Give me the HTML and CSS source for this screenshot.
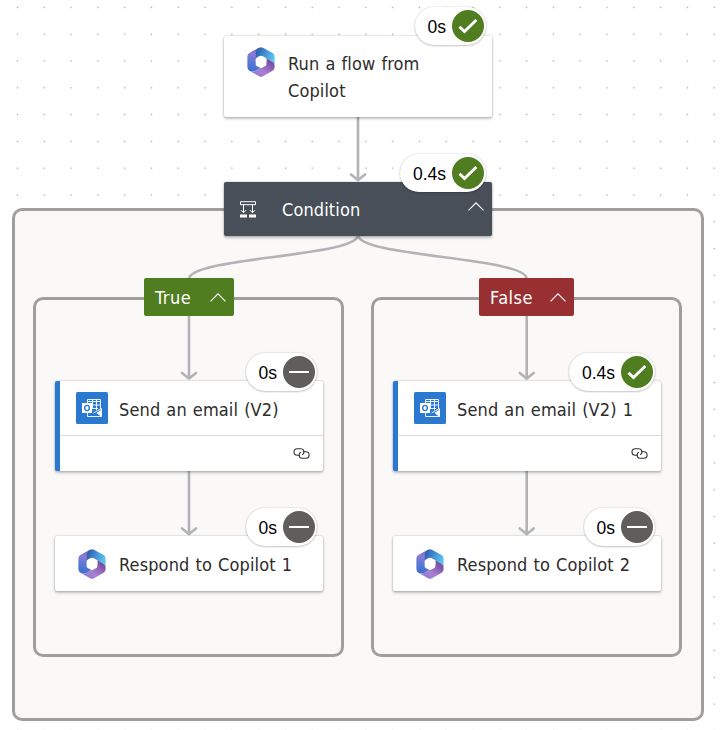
FILE: index.html
```html
<!DOCTYPE html>
<html lang="en">
<head>
<meta charset="utf-8">
<title>Flow run</title>
<link rel="stylesheet" href="styles.css">
</head>
<body>
<svg class="defs" width="0" height="0" aria-hidden="true">
  <defs>
    <linearGradient id="gLeft" x1=".6" y1="0" x2=".4" y2="1"><stop offset="0" stop-color="#5567b8"/><stop offset=".3" stop-color="#8c7cd6"/><stop offset=".65" stop-color="#5a78d6"/><stop offset="1" stop-color="#3f6fce"/></linearGradient>
    <linearGradient id="gTop" x1="0" y1=".3" x2="1" y2=".7"><stop offset="0" stop-color="#2f5cab"/><stop offset=".45" stop-color="#4492d5"/><stop offset="1" stop-color="#62cdf2"/></linearGradient>
    <linearGradient id="gBottom" x1="0" y1="1" x2="1" y2="0"><stop offset="0" stop-color="#7a78d8"/><stop offset=".4" stop-color="#ab80d4"/><stop offset="1" stop-color="#613c8c"/></linearGradient>
    <symbol id="copilot" viewBox="0 0 28 30">
      <path fill="url(#gLeft)" d="M12 .7 2.300 6.100Q.4 7.200.4 9.400v10.900q0 2.200 2 3.400 3.200 1.800 6.400 0l8.200-4.600-3-1.100-5.100-3V12l2-6z"/>
      <path fill="url(#gTop)" d="M12 .7q2-1.100 4 0l9.600 5.400q2 1.200 2 3.400v9.100q-.2-2.700-2.600-4.100L16.200 9.400q-2.200-1.100-4.400.1l-3 1.800V7Q8.800 2.600 12 .7z"/>
      <path fill="url(#gBottom)" d="m19.400 11.300 5.600 3.200q2.600 1.500 2.600 4.100v1.700q0 2.200-2 3.400L16 29.200q-2 1.100-4 0l-9.600-5.500q3.200 1.800 6.400 0l8.600-4.900q2-1.300 2-3.600z"/>
      <path fill="#fff" d="M13 9.200q1-.5 2 0l3.300 1.900q1 .6 1 1.700v4.400q0 1.100-1 1.700L15 20.800q-1 .5-2 0l-3.300-1.900q-1-.6-1-1.700v-4.400q0-1.100 1-1.700z"/>
    </symbol>
    <symbol id="outlook" viewBox="0 0 32 32">
      <rect width="32" height="32" rx="1.500" fill="#2b78d0"/>
      <g fill="none" stroke="#fff" stroke-width=".9">
        <path d="M11.500 11V7.500h13V17M11.500 9.500h13M16 13h8.500M16 16.500h6M16.500 7.500V17M20.500 7.500V18"/>
        <path d="M11.500 20v4.500h14V16.500L17.500 21"/>
      </g>
      <path fill="#fff" d="m20.500 21 5 4V17.500z"/>
      <rect x="6" y="11" width="10" height="10" fill="#fff"/>
      <ellipse cx="11" cy="16" rx="2.300" ry="2.600" fill="none" stroke="#2b78d0" stroke-width="1.400"/>
    </symbol>
    <symbol id="condition" viewBox="0 0 16 17">
      <path fill="none" stroke="#fff" d="M.5.700h15v3H.5zM3.500 3.700v8M12.500 3.700v8M1 9.200l2.500 2.500L6 9.200M10 9.200l2.500 2.500L15 9.200"/>
      <path fill="#fff" d="M0 13.400h7v3H0zM9 13.400h7v3H9z"/>
    </symbol>
    <symbol id="chevron" viewBox="0 0 16 9">
      <path d="M.5 8.400 8 .9l7.500 7.500" fill="none" stroke="#fff" stroke-width="1.100"/>
    </symbol>
    <symbol id="link" viewBox="0 0 17 11">
      <g fill="none" stroke="#323130" stroke-width="1.100">
        <path d="M7 7.300H4.300a3.300 3.300 0 0 1 0-6.600h3.500a3.200 3.200 0 0 1 2.900 4.500 3 3 0 0 1-1.500 1.600"/>
        <path d="M10 3.700h2.800a3.300 3.300 0 0 1 0 6.600H9.200a3.200 3.200 0 0 1-2.900-4.500 3 3 0 0 1 1.500-1.600"/>
      </g>
    </symbol>
    <symbol id="ok" viewBox="0 0 32 32">
      <circle cx="16" cy="16" r="16" fill="#4f7d20"/>
      <path d="m7.500 16.800 5 4.800L24.300 10" fill="none" stroke="#fff" stroke-width="2.900"/>
    </symbol>
    <symbol id="skip" viewBox="0 0 32 32">
      <circle cx="16" cy="16" r="16" fill="#605e5c"/>
      <path d="M6 16h20" stroke="#fff" stroke-width="2"/>
    </symbol>
  </defs>
</svg>

<main class="canvas">
  <section class="scope scope-outer"></section>
  <section class="scope scope-true"></section>
  <section class="scope scope-false"></section>

  <svg class="edges" viewBox="0 0 724 730" width="724" height="730" aria-hidden="true">
    <path d="M358 117v63M351 174.500l7 5.500 7-5.500"/>
    <path d="M358 235C358 257 189 257 189 279M358 235C358 257 526.700 257 526.700 279"/>
    <path d="M189 316v62.500M182 373l7 5.500 7-5.500M526.700 316v62.500M519.700 373l7 5.500 7-5.500"/>
    <path d="M189 471v63M182 528.500l7 5.500 7-5.500M526.700 471v63M519.700 528.500l7 5.500 7-5.500"/>
  </svg>

  <article class="node trigger">
    <div class="head"><svg class="logo"><use href="#copilot"/></svg><span class="title">Run a flow from Copilot</span></div>
    <div class="badge"><span>0s</span><svg><use href="#ok"/></svg></div>
  </article>

  <article class="node cond">
    <svg class="cond-icon"><use href="#condition"/></svg>
    <span class="title">Condition</span>
    <svg class="chevron"><use href="#chevron"/></svg>
    <div class="badge"><span>0.4s</span><svg><use href="#ok"/></svg></div>
  </article>

  <div class="branch branch-true"><span>True</span><svg class="chevron"><use href="#chevron"/></svg></div>
  <div class="branch branch-false"><span>False</span><svg class="chevron"><use href="#chevron"/></svg></div>

  <article class="node email left">
    <div class="head"><svg class="app"><use href="#outlook"/></svg><span class="title">Send an email (V2)</span></div>
    <div class="foot"><svg class="link"><use href="#link"/></svg></div>
    <div class="badge"><span>0s</span><svg><use href="#skip"/></svg></div>
  </article>
  <article class="node respond left">
    <div class="head"><svg class="logo"><use href="#copilot"/></svg><span class="title">Respond to Copilot 1</span></div>
    <div class="badge"><span>0s</span><svg><use href="#skip"/></svg></div>
  </article>

  <article class="node email right">
    <div class="head"><svg class="app"><use href="#outlook"/></svg><span class="title">Send an email (V2) 1</span></div>
    <div class="foot"><svg class="link"><use href="#link"/></svg></div>
    <div class="badge"><span>0.4s</span><svg><use href="#ok"/></svg></div>
  </article>
  <article class="node respond right">
    <div class="head"><svg class="logo"><use href="#copilot"/></svg><span class="title">Respond to Copilot 2</span></div>
    <div class="badge"><span>0s</span><svg><use href="#skip"/></svg></div>
  </article>
</main>
</body>
</html>
```
FILE: styles.css
```css
* { box-sizing: border-box; }

body {
  margin: 0;
  background: #fff;
  font-family: "DejaVu Sans Condensed", "DejaVu Sans", sans-serif;
  font-stretch: condensed;
  font-size: 18px;
  letter-spacing: .12px;
  word-spacing: .8px;
  color: #2d2c2b;
}

.defs { position: absolute; }
svg { display: block; flex: none; }

.canvas {
  position: relative;
  width: 724px;
  height: 730px;
  overflow: hidden;
  background-image: radial-gradient(circle at 50% 50%, #aaa 0, #aaa .6px, transparent 1.1px);
  background-size: 26.8px 26.8px;
  background-position: 4.1px -6px;
}

.scope {
  position: absolute;
  border: 3px solid #a19f9d;
  border-radius: 10px;
  background: #faf9f8;
}
.scope-outer { left: 12px; top: 208px; width: 692px; height: 513px; }
.scope-true { left: 33px; top: 297px; width: 311px; height: 360px; }
.scope-false { left: 371px; top: 297px; width: 311px; height: 360px; }

.edges { position: absolute; inset: 0; }
.edges path {
  fill: none;
  stroke: #b3b2b7;
  stroke-width: 2.600;
  stroke-linecap: round;
}

.node {
  position: absolute;
  width: 268px;
  border-radius: 2px;
  background: #fff;
  box-shadow: 0 0 2px rgba(0, 0, 0, .3), 0 2px 3px rgba(0, 0, 0, .22);
}
.head {
  display: flex;
  align-items: center;
  height: 55px;
  padding-left: 23px;
}
.logo { width: 28px; height: 30px; margin-right: 13px; }
.title { line-height: 27px; white-space: nowrap; padding-top: 2px; }

.trigger { left: 224px; top: 36px; height: 81px; }
.trigger .head { height: auto; align-items: flex-start; padding-top: 12px; }
.trigger .logo { margin-top: -1px; }
.trigger .title { width: 160px; white-space: normal; }

.cond {
  left: 224px;
  top: 182px;
  height: 54px;
  display: flex;
  align-items: center;
  padding: 0 8px 0 16px;
  background: #484f58;
  color: #fff;
}
.cond .title { padding-top: 0; }
.cond-icon { width: 16px; height: 17px; margin-right: 26px; }
.chevron { width: 16px; height: 9px; }
.cond .chevron { margin: -6px 0 0 auto; }

.branch {
  position: absolute;
  top: 278px;
  height: 38px;
  display: flex;
  align-items: center;
  justify-content: space-between;
  padding: 0 8px 0 11px;
  border-radius: 2px;
  color: #fff;
  letter-spacing: .5px;
}
.branch span { padding-top: 1px; }
.branch-true { left: 144px; width: 90px; background: #4f7d20; }
.branch-false { left: 479px; width: 95px; background: #983032; }

.left { left: 55px; }
.right { left: 393px; }

.email {
  top: 381px;
  height: 90px;
  border-left: 5px solid #2b78d0;
}
.email .head { padding-left: 16px; border-bottom: 1px solid #dcdcdc; }
.app { width: 32px; height: 32px; margin-right: 11px; }
.foot {
  display: flex;
  justify-content: flex-end;
  align-items: center;
  height: 35px;
  padding-right: 13px;
}
.link { width: 17px; height: 11px; }

.respond { top: 536px; height: 55px; }

.badge {
  position: absolute;
  right: 6px;
  top: -29px;
  height: 38px;
  display: flex;
  align-items: center;
  gap: 6px;
  padding: 0 2px 1px 13px;
  border-radius: 19px;
  background: #fff;
  box-shadow: 0 0 2px rgba(0, 0, 0, .2), 0 1px 2px rgba(0, 0, 0, .18);
  color: #000;
  font: 17.500px/20px "Liberation Sans", Arial, sans-serif;
  letter-spacing: 0;
}
.cond .badge, .email .badge, .respond .badge { top: -28px; }
.badge span { padding-top: 2px; }
.badge svg { width: 32px; height: 32px; }
```
